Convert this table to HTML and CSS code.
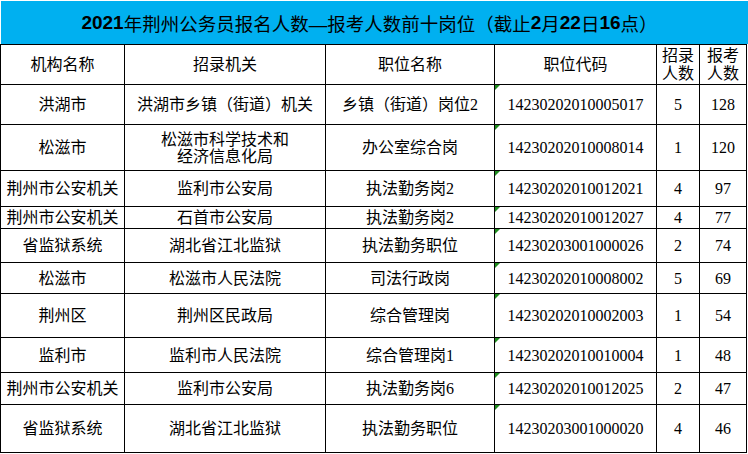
FILE: index.html
```html
<!DOCTYPE html>
<html lang="zh-CN">
<head>
<meta charset="utf-8">
<title>2021年荆州公务员报名人数</title>
<link rel="stylesheet" href="styles.css">
</head>
<body>
<div class="sheet">
  <div class="title"><span class="num">2021</span>年荆州公务员报名人数—报考人数前十岗位（截止<span class="num">2</span>月<span class="num">22</span>日<span class="num">16</span>点）</div>
  <div class="grid">
    <div class="cell">机构名称</div>
    <div class="cell">招录机关</div>
    <div class="cell">职位名称</div>
    <div class="cell">职位代码</div>
    <div class="cell two">招录<br>人数</div>
    <div class="cell two">报考<br>人数</div>

    <div class="cell">洪湖市</div>
    <div class="cell">洪湖市乡镇（街道）机关</div>
    <div class="cell">乡镇（街道）岗位2</div>
    <div class="cell code">14230202010005017</div>
    <div class="cell">5</div>
    <div class="cell">128</div>

    <div class="cell">松滋市</div>
    <div class="cell lines">松滋市科学技术和<br>经济信息化局</div>
    <div class="cell">办公室综合岗</div>
    <div class="cell code">14230202010008014</div>
    <div class="cell">1</div>
    <div class="cell">120</div>

    <div class="cell">荆州市公安机关</div>
    <div class="cell">监利市公安局</div>
    <div class="cell">执法勤务岗2</div>
    <div class="cell code">14230202010012021</div>
    <div class="cell">4</div>
    <div class="cell">97</div>

    <div class="cell">荆州市公安机关</div>
    <div class="cell">石首市公安局</div>
    <div class="cell">执法勤务岗2</div>
    <div class="cell code">14230202010012027</div>
    <div class="cell">4</div>
    <div class="cell">77</div>

    <div class="cell">省监狱系统</div>
    <div class="cell">湖北省江北监狱</div>
    <div class="cell">执法勤务职位</div>
    <div class="cell code">14230203001000026</div>
    <div class="cell">2</div>
    <div class="cell">74</div>

    <div class="cell">松滋市</div>
    <div class="cell">松滋市人民法院</div>
    <div class="cell">司法行政岗</div>
    <div class="cell code">14230202010008002</div>
    <div class="cell">5</div>
    <div class="cell">69</div>

    <div class="cell">荆州区</div>
    <div class="cell">荆州区民政局</div>
    <div class="cell">综合管理岗</div>
    <div class="cell code">14230202010002003</div>
    <div class="cell">1</div>
    <div class="cell">54</div>

    <div class="cell">监利市</div>
    <div class="cell">监利市人民法院</div>
    <div class="cell">综合管理岗1</div>
    <div class="cell code">14230202010010004</div>
    <div class="cell">1</div>
    <div class="cell">48</div>

    <div class="cell">荆州市公安机关</div>
    <div class="cell">监利市公安局</div>
    <div class="cell">执法勤务岗6</div>
    <div class="cell code">14230202010012025</div>
    <div class="cell">2</div>
    <div class="cell">47</div>

    <div class="cell">省监狱系统</div>
    <div class="cell">湖北省江北监狱</div>
    <div class="cell">执法勤务职位</div>
    <div class="cell code">14230203001000020</div>
    <div class="cell">4</div>
    <div class="cell">46</div>
  </div>
</div>
</body>
</html>
```
FILE: styles.css
```css
html, body {
  margin: 0;
  padding: 0;
  background: #ffffff;
}

.sheet {
  width: 748px;
}

.title {
  margin: 1px 0 0 1px;
  height: 43px;
  background: #00b0f0;
  color: #000;
  font-family: "Liberation Sans", "Noto Sans CJK SC", sans-serif;
  font-size: 18.5px;
  display: flex;
  align-items: center;
  justify-content: center;
  padding-right: 10px;
  box-sizing: border-box;
}

.title .num {
  font-weight: bold;
  font-size: 19px;
}

.grid {
  width: 747px;
  box-sizing: border-box;
  display: grid;
  grid-template-columns: 123px 200px 168px 161px 42px 46px;
  grid-template-rows: 39px 39px 45px 35px 21px 33px 30px 43px 34px 31px 47px;
  gap: 1px;
  padding: 1px;
  background: #000;
}

.cell {
  background: #fff;
  display: flex;
  align-items: center;
  justify-content: center;
  text-align: center;
  font-family: "Liberation Serif", "Noto Sans CJK SC", serif;
  font-size: 16px;
  line-height: 17px;
  color: #000;
  white-space: nowrap;
  overflow: hidden;
}

.cell.two {
  line-height: 18px;
  padding-top: 1px;
}

.cell.code {
  position: relative;
}

.cell.code::before {
  content: "";
  position: absolute;
  left: 0;
  top: 0;
  width: 0;
  height: 0;
  border-top: 5px solid #1e8c1e;
  border-right: 5px solid transparent;
}
```
